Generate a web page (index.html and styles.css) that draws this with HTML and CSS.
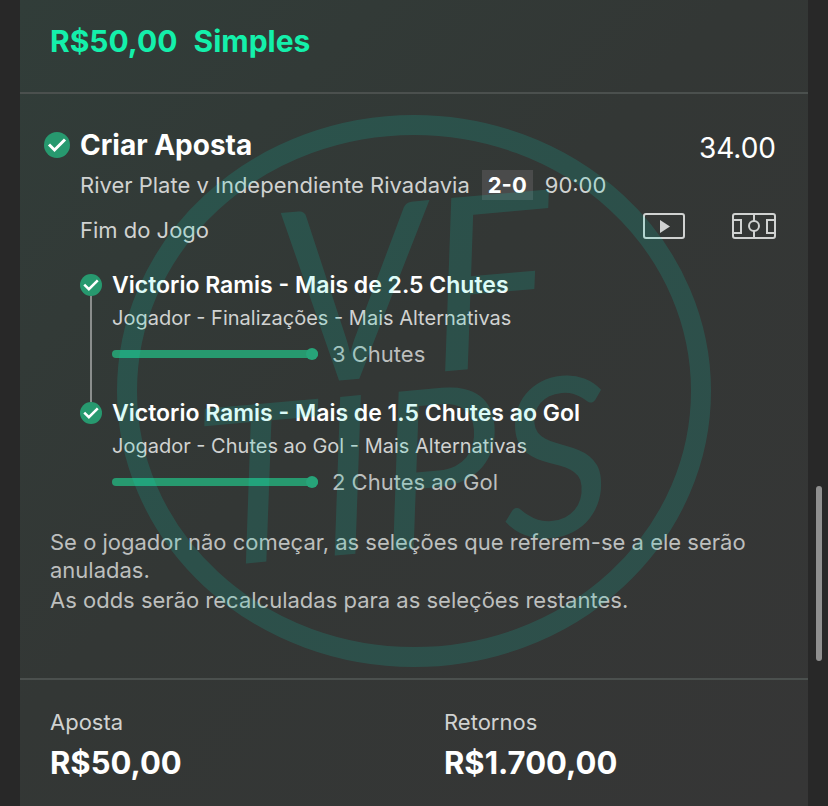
FILE: index.html
```
<!DOCTYPE html>
<html lang="pt-BR">
<head>
  <meta charset="UTF-8" />
  <meta name="viewport" content="width=device-width, initial-scale=1.0" />
  <title>Minhas Apostas</title>
  <link rel="stylesheet" href="styles.css">
</head>
<body>

  <main class="slip">
    <header class="slip-header">
      <h1><span>R$50,00</span><span>Simples</span></h1>
    </header>

    <section class="bet">
      <div class="bet-head">
        <svg class="check" viewBox="0 0 26 26" aria-hidden="true">
          <circle cx="13" cy="13" r="13" />
          <path d="M5 12.500l5.500 5.500L21 7.500" />
        </svg>
        <h2>Criar Aposta</h2>
        <span class="odds">34.00</span>
      </div>

      <div class="bet-body">
        <div class="match">
          <span>River Plate v Independiente Rivadavia</span>
          <strong class="score">2-0</strong>
          <span>90:00</span>
        </div>

        <div class="status">
          <span class="status-text">Fim do Jogo</span>
          <button class="icon-btn" aria-label="Assistir">
            <svg width="42" height="28" viewBox="0 0 42 28">
              <rect x="1" y="2" width="40" height="24" rx="2" />
              <path class="solid" d="M17 8v13l10-6.500z" />
            </svg>
          </button>
          <button class="icon-btn" aria-label="Campo">
            <svg width="44" height="28" viewBox="0 0 44 28">
              <rect x="1" y="2" width="42" height="24" rx="2" />
              <path d="M22 2v7M22 19v7M2 8h7v13H2M42 8h-7v13h7" />
              <circle cx="22" cy="14" r="5" />
            </svg>
          </button>
        </div>

        <ul class="legs">
          <li class="leg">
            <div class="leg-marker">
              <svg class="check" viewBox="0 0 26 26" aria-hidden="true">
                <circle cx="13" cy="13" r="13" />
                <path d="M5 12.500l5.500 5.500L21 7.500" />
              </svg>
            </div>
            <div class="leg-info">
              <h3>Victorio Ramis - Mais de 2.5 Chutes</h3>
              <p>Jogador - Finalizações - Mais Alternativas</p>
              <div class="progress">
                <div class="bar"><div class="fill" style="width: 100%"></div></div>
                <span>3 Chutes</span>
              </div>
            </div>
          </li>
          <li class="leg">
            <div class="leg-marker">
              <svg class="check" viewBox="0 0 26 26" aria-hidden="true">
                <circle cx="13" cy="13" r="13" />
                <path d="M5 12.500l5.500 5.500L21 7.500" />
              </svg>
            </div>
            <div class="leg-info">
              <h3>Victorio Ramis - Mais de 1.5 Chutes ao Gol</h3>
              <p>Jogador - Chutes ao Gol - Mais Alternativas</p>
              <div class="progress">
                <div class="bar"><div class="fill" style="width: 100%"></div></div>
                <span>2 Chutes ao Gol</span>
              </div>
            </div>
          </li>
        </ul>
      </div>

      <div class="note">
        <p>Se o jogador não começar, as seleções que referem-se a ele serão anuladas.</p>
        <p>As odds serão recalculadas para as seleções restantes.</p>
      </div>

      <!-- Watermark -->
      <svg class="watermark" viewBox="0 0 594 554" aria-hidden="true">
        <ellipse cx="297" cy="277" rx="287" ry="266" />
        <g transform="rotate(-5 297 277)">
          <text class="wm-top" x="306" y="260">VF</text>
          <text class="wm-bottom" x="280" y="434">TIPS</text>
        </g>
      </svg>
    </section>

    <footer class="totals">
      <dl>
        <dt>Aposta</dt>
        <dd>R$50,00</dd>
      </dl>
      <dl>
        <dt>Retornos</dt>
        <dd>R$1.700,00</dd>
      </dl>
    </footer>
  </main>

  <div class="scroll-thumb"></div>

</body>
</html>
```
FILE: styles.css
```
* {
  box-sizing: border-box;
}
body {
  font-family: Inter, "Liberation Sans", sans-serif;
  font-size: 22px;
  background-color: #282828;
  color: #d0d2d1;
  margin: 0;
}
h1, h2, h3, p, ul, dl, dd {
  margin: 0;
  padding: 0;
}
.slip {
  margin: 0 20px;
  min-height: 100vh;
  background: linear-gradient(135deg, #313d39 0%, #333735 45%, #363636 100%);
}
.slip-header {
  padding: 20px 30px 30px;
  border-bottom: 2px solid #4b504e;
}
.slip-header h1 {
  display: flex;
  flex-wrap: wrap;
  gap: 0 16px;
  font-size: 30px;
  line-height: 42px;
  font-weight: 700;
  color: #14f0ab;
}

/* Bet */
.bet {
  position: relative;
  padding: 34px 32px 64px 30px;
  border-bottom: 2px solid #4b504e;
}
.bet-head {
  display: flex;
  align-items: flex-start;
  gap: 10px;
  margin-left: -6px;
  line-height: 34px;
  color: #fff;
}
.bet-head h2 {
  flex: 1;
  font-size: 28px;
  font-weight: 700;
}
.odds {
  font-size: 28px;
  line-height: 40px;
}
.check {
  flex: none;
  width: 26px;
  height: 26px;
  margin-top: 4px;
}
.check circle {
  fill: #27996f;
}
.check path {
  fill: none;
  stroke: #fff;
  stroke-width: 3;
}
.bet-body {
  padding-left: 30px;
}
.match {
  display: flex;
  flex-wrap: wrap;
  align-items: center;
  gap: 0 12px;
  margin-top: 2px;
  line-height: 30px;
}
.score {
  padding: 0 6px;
  background: #4a4b4b;
  color: #fff;
}
.status {
  display: flex;
  align-items: flex-start;
  margin-top: 12px;
  line-height: 36px;
}
.status-text {
  flex: 1;
}
.icon-btn {
  display: block;
  padding: 0;
  border: none;
  background: none;
  cursor: pointer;
}
.icon-btn + .icon-btn {
  margin-left: 47px;
}
.icon-btn svg {
  display: block;
  fill: none;
  stroke: #d0d2d1;
  stroke-width: 2;
}
.icon-btn .solid {
  fill: #d0d2d1;
  stroke: none;
}

/* Selections */
.legs {
  list-style: none;
  margin-top: 21px;
}
.leg {
  display: flex;
  gap: 10px;
}
.leg-marker {
  display: flex;
  flex-direction: column;
  align-items: center;
}
.leg-marker .check {
  width: 22px;
  height: 22px;
  margin-top: 5px;
}
.leg:not(:last-child) .leg-info {
  padding-bottom: 24px;
}
.leg:not(:last-child) .leg-marker::after {
  content: "";
  flex: 1;
  width: 2px;
  margin-bottom: -5px;
  background: #8b8e8d;
}
.leg h3 {
  font-size: 23px;
  line-height: 32px;
  font-weight: 600;
  color: #fff;
}
.leg p {
  font-size: 20px;
  line-height: 34px;
}
.progress {
  display: flex;
  align-items: center;
  gap: 14px;
  line-height: 38px;
  color: #bdbfbe;
}
.bar {
  width: 206px;
  height: 8px;
  border-radius: 4px;
}
.fill {
  position: relative;
  height: 100%;
  border-radius: 4px;
  background: #27996f;
}
.fill::after {
  content: "";
  position: absolute;
  top: -2px;
  right: 0;
  width: 12px;
  height: 12px;
  border-radius: 50%;
  background: #27a479;
}
.note {
  margin-top: 27px;
  line-height: 28px;
  color: #bdbfbe;
}
.note p + p {
  margin-top: 2px;
}

/* Watermark over the bet */
.watermark {
  position: absolute;
  top: 20px;
  left: 50%;
  width: 594px;
  height: 554px;
  margin-left: -297px;
  overflow: visible;
  opacity: 0.14;
  pointer-events: none;
}
.watermark ellipse {
  fill: none;
  stroke: #08e8cb;
  stroke-width: 20;
}
.watermark text {
  fill: #08e8cb;
  font-family: Lato, sans-serif;
  font-style: italic;
  font-weight: 400;
  text-anchor: middle;
}
.watermark .wm-top {
  font-size: 240px;
}
.watermark .wm-bottom {
  font-size: 220px;
}

/* Totals */
.totals {
  display: grid;
  grid-template-columns: 1fr 1fr;
  padding: 24px 0 21px;
}
.totals dl {
  padding-left: 30px;
}
.totals dt {
  line-height: 36px;
}
.totals dd {
  margin-top: 1px;
  font-size: 31px;
  line-height: 44px;
  font-weight: 700;
  color: #fff;
}

.scroll-thumb {
  position: fixed;
  top: 486px;
  right: 6px;
  width: 6px;
  height: 175px;
  border-radius: 3px;
  background: #8f8f8f;
}
```
